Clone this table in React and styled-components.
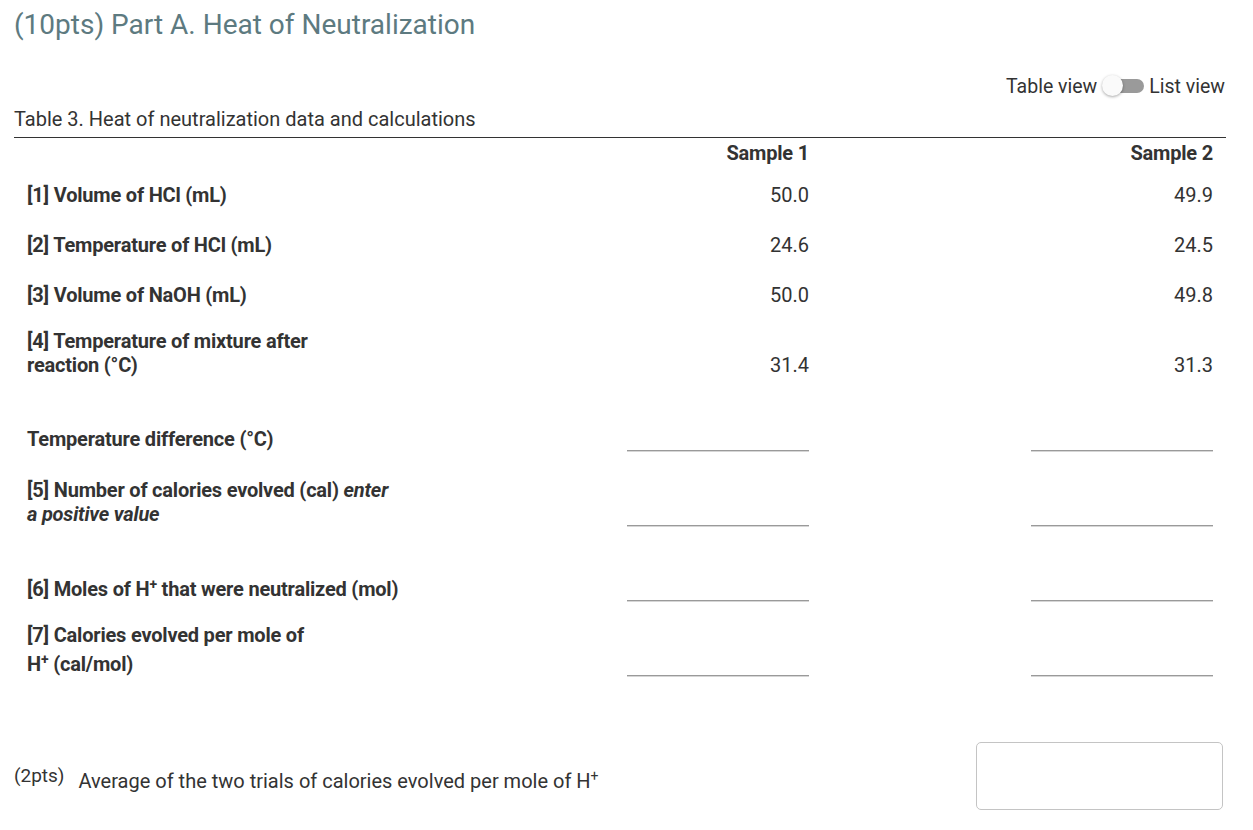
import React, { useState } from "react";
import styled, { createGlobalStyle } from "styled-components";

const GlobalStyle = createGlobalStyle`
  body {
    margin: 0;
    background: #fff;
    font-family: Roboto, "Liberation Sans", Arial, sans-serif;
    color: #333;
  }
`;

const Page = styled.div`
  width: 1212px;
  margin-left: 14px;
  padding-top: 9px;
`;

const Title = styled.h2`
  margin: 0;
  font-size: 28px;
  line-height: 32px;
  font-weight: 400;
  color: #5d7a80;
`;

const ViewBar = styled.div`
  display: flex;
  justify-content: flex-end;
  align-items: center;
  gap: 5px;
  margin-top: 33px;
  height: 24px;
  font-size: 19.5px;
  color: #333;
  padding-right: 1px;
`;

const SwitchTrack = styled.button`
  position: relative;
  width: 42px;
  height: 24px;
  padding: 0;
  border: none;
  background: transparent;
  cursor: pointer;

  &::before {
    content: "";
    position: absolute;
    left: 6px;
    right: 0;
    top: 5px;
    height: 14px;
    border-radius: 7px;
    background: ${(p) => (p.on ? "#8fb3ba" : "#9a9a9a")};
  }
`;

const Thumb = styled.span`
  position: absolute;
  top: 1px;
  left: ${(p) => (p.on ? "21px" : "0px")};
  width: 21px;
  height: 21px;
  border-radius: 50%;
  background: #fafafa;
  box-shadow: 0 1px 3px rgba(0, 0, 0, 0.35);
  transition: left 0.2s;
`;

const Caption = styled.div`
  margin-top: 9px;
  font-size: 20px;
  line-height: 24px;
  padding-bottom: 6px;
  border-bottom: 1px solid #333;
`;

const Grid = styled.div`
  display: grid;
  grid-template-columns: 404px 404px 404px;
`;

const Cell = styled.div`
  display: flex;
  align-items: flex-end;
  justify-content: ${(p) => (p.label ? "flex-start" : "flex-end")};
  padding: ${(p) => p.top || "13px"} 13px ${(p) => p.bottom || "13px"};
  font-size: 20px;
  line-height: 24px;
  font-weight: ${(p) => (p.label ? 700 : 400)};
  letter-spacing: ${(p) => (p.label ? "-0.2px" : "0")};
  white-space: nowrap;
  color: #333;
`;

const HeadCell = styled.div`
  padding: 3px 13px 5px;
  text-align: right;
  font-size: 20px;
  line-height: 24px;
  font-weight: 700;
  letter-spacing: -0.2px;
  color: #333;
`;

const Blank = styled.div`
  width: 182px;
  height: 48px;
  border-bottom: 1px solid #9a9a9a;
  box-shadow: 0 1px 0 #d6d6d6;
`;

const Sup = styled.sup`
  font-size: 14px;
  line-height: 24px;
  vertical-align: 7px;
`;

const Footer = styled.div`
  display: flex;
  justify-content: space-between;
  align-items: center;
  margin-top: 53px;
  padding-right: 3px;
`;

const Question = styled.div`
  display: flex;
  align-items: center;
  gap: 14px;
`;

const Points = styled.span`
  font-size: 19px;
  margin-top: -1px;
`;

const QText = styled.span`
  font-size: 20px;
  line-height: 24px;
  margin-top: 5px;
`;

const AnswerBox = styled.input`
  width: 247px;
  height: 68px;
  box-sizing: border-box;
  border: 1px solid #c4c4c4;
  border-radius: 5px;
  outline: none;
  font-size: 18px;
  padding: 0 10px;
`;

const rows = [
  { label: "[1] Volume of HCl (mL)", v: ["50.0", "49.9"] },
  { label: "[2] Temperature of HCl (mL)", v: ["24.6", "24.5"] },
  { label: "[3] Volume of NaOH (mL)", v: ["50.0", "49.8"] },
  {
    label: (
      <>
        [4] Temperature of mixture after
        <br />
        reaction (°C)
      </>
    ),
    v: ["31.4", "31.3"],
    top: "9px",
    bottom: "12px",
  },
  { label: "Temperature difference (°C)" },
  {
    label: (
      <>
        [5] Number of calories evolved (cal) <i>enter</i>
        <br />
        <i>a positive value</i>
      </>
    ),
  },
  {
    label: (
      <>
        [6] Moles of H<Sup>+</Sup> that were neutralized (mol)
      </>
    ),
  },
  {
    label: (
      <>
        [7] Calories evolved per mole of
        <br />
        H<Sup>+</Sup> (cal/mol)
      </>
    ),
    top: "9px",
  },
];

export default function App() {
  const [list, setList] = useState(false);

  return (
    <>
      <GlobalStyle />
      <Page>
        <Title>(10pts) Part A. Heat of Neutralization</Title>
        <ViewBar>
          <span>Table view</span>
          <SwitchTrack on={list} onClick={() => setList((p) => !p)}>
            <Thumb on={list} />
          </SwitchTrack>
          <span>List view</span>
        </ViewBar>
        <Caption>Table 3. Heat of neutralization data and calculations</Caption>
        <Grid>
          <div />
          <HeadCell>Sample 1</HeadCell>
          <HeadCell>Sample 2</HeadCell>
          {rows.map((r, i) => (
            <React.Fragment key={i}>
              <Cell label="1" top={r.top} bottom={r.bottom}>
                <div>{r.label}</div>
              </Cell>
              {[0, 1].map((c) => (
                <Cell key={c} top={r.top} bottom={r.bottom}>
                  {r.v ? r.v[c] : <Blank />}
                </Cell>
              ))}
            </React.Fragment>
          ))}
        </Grid>
        <Footer>
          <Question>
            <Points>(2pts)</Points>
            <QText>
              Average of the two trials of calories evolved per mole of H
              <Sup>+</Sup>
            </QText>
          </Question>
          <AnswerBox />
        </Footer>
      </Page>
    </>
  );
}
